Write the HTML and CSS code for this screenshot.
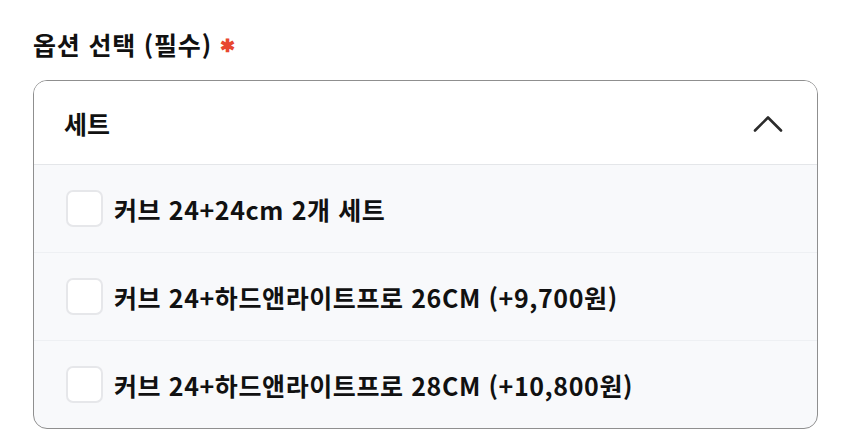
FILE: index.html
```html
<!DOCTYPE html>
<html lang="ko">
<head>
<meta charset="utf-8">
<link rel="stylesheet" href="styles.css">
</head>
<body>
<div class="page">
  <div class="label">옵션 선택 (필수) <span class="req">✱</span></div>
  <div class="select">
    <div class="select-head">
      <span class="head-text">세트</span>
      <svg class="chev" width="30" height="17" viewBox="0 0 30 17"><path d="M2 15.5 L15 2.5 L28 15.5" fill="none" stroke="#2b2b2b" stroke-width="2.6" stroke-linecap="round" stroke-linejoin="round"/></svg>
    </div>
    <div class="options">
      <label class="opt"><span class="box"></span><span class="opt-text">커브 24+24cm 2개 세트</span></label>
      <label class="opt"><span class="box"></span><span class="opt-text">커브 24+하드앤라이트프로 26CM (+9,700원)</span></label>
      <label class="opt"><span class="box"></span><span class="opt-text">커브 24+하드앤라이트프로 28CM (+10,800원)</span></label>
    </div>
  </div>
</div>
</body>
</html>
```
FILE: styles.css
```css
* { box-sizing: border-box; }
html, body { margin: 0; padding: 0; background: #ffffff; }
body {
  font-family: "Noto Sans CJK KR", "Noto Sans", sans-serif;
  color: #111111;
}
.page {
  width: 850px;
  height: 448px;
  padding: 27px 32px 0 33px;
}
.label {
  font-size: 25px;
  font-weight: 700;
  line-height: 34px;
  height: 34px;
  letter-spacing: 0.8px;
  display: flex;
  align-items: center;
}
.req {
  color: #e8472f;
  font-size: 18px;
  margin-left: 8px;
  line-height: 1;
  margin-top: 0;
}
.select {
  margin-top: 19px;
  width: 785px;
  border: 1.5px solid #8f8f8f;
  border-radius: 14px;
  overflow: hidden;
  background: #f8f9fb;
}
.select-head {
  height: 84px;
  background: #ffffff;
  border-bottom: 1px solid #e4e6e9;
  display: flex;
  align-items: center;
  justify-content: space-between;
  padding: 0 34px 0 30px;
}
.head-text {
  font-size: 25px;
  font-weight: 700;
  letter-spacing: 0;
}
.chev { display: block; margin-top: 2px; }
.options { display: flex; flex-direction: column; }
.opt {
  height: 88px;
  display: flex;
  align-items: center;
  gap: 11px;
  padding-left: 32px;
  border-bottom: 1px solid #eef0f3;
}
.opt:last-child { border-bottom: none; height: 87px; }
.box {
  width: 37px;
  height: 37px;
  border: 2px solid #e6e7ea;
  border-radius: 7px;
  background: #ffffff;
  flex: none;
}
.opt-text {
  font-size: 25px;
  font-weight: 700;
  letter-spacing: 0.6px;
}
```
